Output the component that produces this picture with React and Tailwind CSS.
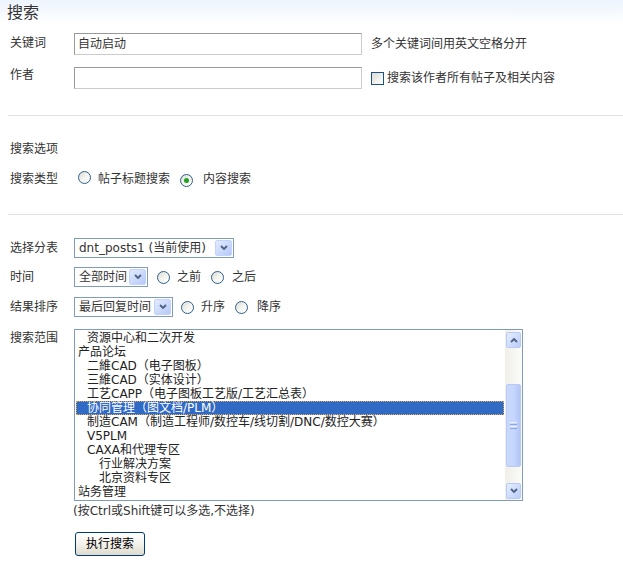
import React from "react";

function Radio({ checked }) {
  return (
    <span className="inline-flex h-[13px] w-[13px] shrink-0 items-center justify-center rounded-full border border-[#2f5d8a] bg-gradient-to-br from-[#dcdcd4] via-[#f4f4f0] to-white">
      {checked && <span className="h-[5px] w-[5px] rounded-full bg-[#21a121]" />}
    </span>
  );
}

function Checkbox() {
  return (
    <span className="inline-block h-[13px] w-[13px] shrink-0 border border-[#1c5180] bg-gradient-to-br from-[#dcdcd4] to-white" />
  );
}

function Chevron({ up }) {
  return (
    <svg width="8" height="6" viewBox="0 0 8 6" className="block">
      <polyline
        points={up ? "1,5 4,2 7,5" : "1,1 4,4 7,1"}
        fill="none"
        stroke="#4d6185"
        strokeWidth="1.8"
      />
    </svg>
  );
}

function Select({ width, text }) {
  return (
    <div className={`flex h-[20px] shrink-0 items-center border border-[#7f9db9] bg-white ${width}`}>
      <span className="flex-1 truncate pl-[4px] text-[12px] leading-[18px] text-[#333]">{text}</span>
      <span className="mr-[1px] flex h-[16px] w-[17px] items-center justify-center rounded-[2px] border border-[#c3d3fd] bg-gradient-to-br from-[#e3ebfe] to-[#b6c9f7]">
        <Chevron />
      </span>
    </div>
  );
}

const items = [
  { t: "资源中心和二次开发", l: 1 },
  { t: "产品论坛", l: 0 },
  { t: "二維CAD（电子图板）", l: 1 },
  { t: "三維CAD（实体设计）", l: 1 },
  { t: "工艺CAPP（电子图板工艺版/工艺汇总表）", l: 1 },
  { t: "协同管理（图文档/PLM）", l: 1, sel: true },
  { t: "制造CAM（制造工程师/数控车/线切割/DNC/数控大赛）", l: 1 },
  { t: "V5PLM", l: 1 },
  { t: "CAXA和代理专区", l: 1 },
  { t: "行业解决方案", l: 2 },
  { t: "北京资料专区", l: 2 },
  { t: "站务管理", l: 0 },
];

function ScrollBtn({ up }) {
  return (
    <div className="mx-auto flex h-[16px] w-[15px] items-center justify-center rounded-[2px] border border-[#b9cbf5] bg-gradient-to-br from-[#e6eefe] to-[#bacdf9]">
      <Chevron up={up} />
    </div>
  );
}

export default function App() {
  return (
    <div className="min-h-[573px] w-full bg-white text-[12px] leading-[16px] text-[#333] font-['DejaVu_Sans','Noto_Sans_CJK_SC',sans-serif]">
      <div className="h-[25px] bg-gradient-to-b from-[#edf4fd] to-white pl-[7px] text-[16px] leading-[25px] text-[#333]">
        搜索
      </div>

      <div className="pt-[8px]">
        <div className="flex h-[22px]">
          <div className="ml-[10px] w-[64px] pt-[2px]">关键词</div>
          <div className="flex h-[22px] w-[288px] items-center border border-t-[#999] border-l-[#999] border-r-[#ccc] border-b-[#ccc] pl-[3px] text-[#333]">
            自动启动
          </div>
          <div className="ml-[9px] self-center">多个关键词间用英文空格分开</div>
        </div>
        <div className="mt-[12px] flex h-[22px]">
          <div className="ml-[10px] w-[64px]">作者</div>
          <div className="h-[22px] w-[288px] border border-t-[#999] border-l-[#999] border-r-[#ccc] border-b-[#ccc]" />
          <div className="ml-[9px] flex items-center self-center">
            <Checkbox />
            <span className="ml-[3px]">搜索该作者所有帖子及相关内容</span>
          </div>
        </div>
      </div>

      <div className="ml-[8px] mt-[26px] h-px bg-[#e2e2dc]" />

      <div className="ml-[10px] mt-[25px]">搜索选项</div>
      <div className="mt-[14px] flex h-[16px] items-center">
        <div className="ml-[10px] w-[64px]">搜索类型</div>
        <span className="ml-[4px]"><Radio /></span>
        <span className="ml-[7px]">帖子标题搜索</span>
        <span className="ml-[10px]"><Radio checked /></span>
        <span className="ml-[10px]">内容搜索</span>
      </div>

      <div className="ml-[8px] mt-[27px] h-px bg-[#e2e2dc]" />

      <div className="mt-[23px] flex h-[20px] items-center">
        <div className="ml-[10px] w-[64px]">选择分表</div>
        <Select width="w-[160px]" text="dnt_posts1 (当前使用)" />
      </div>
      <div className="mt-[9px] flex h-[20px] items-center">
        <div className="ml-[10px] w-[64px]">时间</div>
        <Select width="w-[74px]" text="全部时间" />
        <span className="ml-[9px] flex"><Radio /></span>
        <span className="ml-[7px]">之前</span>
        <span className="ml-[10px] flex"><Radio /></span>
        <span className="ml-[8px]">之后</span>
      </div>
      <div className="mt-[10px] flex h-[20px] items-center">
        <div className="ml-[10px] w-[64px]">结果排序</div>
        <Select width="w-[99px]" text="最后回复时间" />
        <span className="ml-[8px] flex"><Radio /></span>
        <span className="ml-[7px]">升序</span>
        <span className="ml-[10px] flex"><Radio /></span>
        <span className="ml-[9px]">降序</span>
      </div>

      <div className="mt-[12px] flex">
        <div className="ml-[10px] w-[64px] pt-[1px]">搜索范围</div>
        <div className="flex h-[172px] w-[449px] border border-[#7f9db9] bg-white">
          <div className="flex-1 overflow-hidden px-[1px] pt-[1px] text-[#222]">
            {items.map((it, i) => (
              <div
                key={i}
                className={`h-[14px] overflow-hidden whitespace-nowrap leading-[14px] ${
                  it.l === 0 ? "pl-[2px]" : it.l === 1 ? "pl-[11px]" : "pl-[23px]"
                } ${it.sel ? "bg-[#316ac5] text-white outline-1 outline-dotted outline-[#e0a84a] -outline-offset-1" : ""}`}
              >
                {it.t}
              </div>
            ))}
          </div>
          <div className="flex w-[17px] flex-col bg-gradient-to-r from-[#f0efe8] to-[#fbfbf8]">
            <div className="mt-[2px]"><ScrollBtn up /></div>
            <div className="mx-auto mt-[36px] flex h-[83px] w-[15px] flex-col items-center justify-center gap-[1px] rounded-[2px] border border-[#b9cbf5] bg-gradient-to-r from-[#c9d8fc] via-[#c6d6fd] to-[#b2c6f7]">
              <span className="h-px w-[7px] bg-[#eef3fe]" />
              <span className="h-px w-[7px] bg-[#8da8ea]" />
              <span className="h-px w-[7px] bg-[#eef3fe]" />
              <span className="h-px w-[7px] bg-[#8da8ea]" />
            </div>
            <div className="mt-[16px]"><ScrollBtn /></div>
          </div>
        </div>
      </div>

      <div className="ml-[73px] mt-[2px]">(按Ctrl或Shift键可以多选,不选择)</div>

      <button className="ml-[75px] mt-[13px] flex h-[24px] w-[70px] items-center justify-center rounded-[3px] border border-[#003c74] bg-gradient-to-b from-white via-[#f3f2ec] to-[#dedbcc] text-[12px] text-black">
        执行搜索
      </button>
    </div>
  );
}
